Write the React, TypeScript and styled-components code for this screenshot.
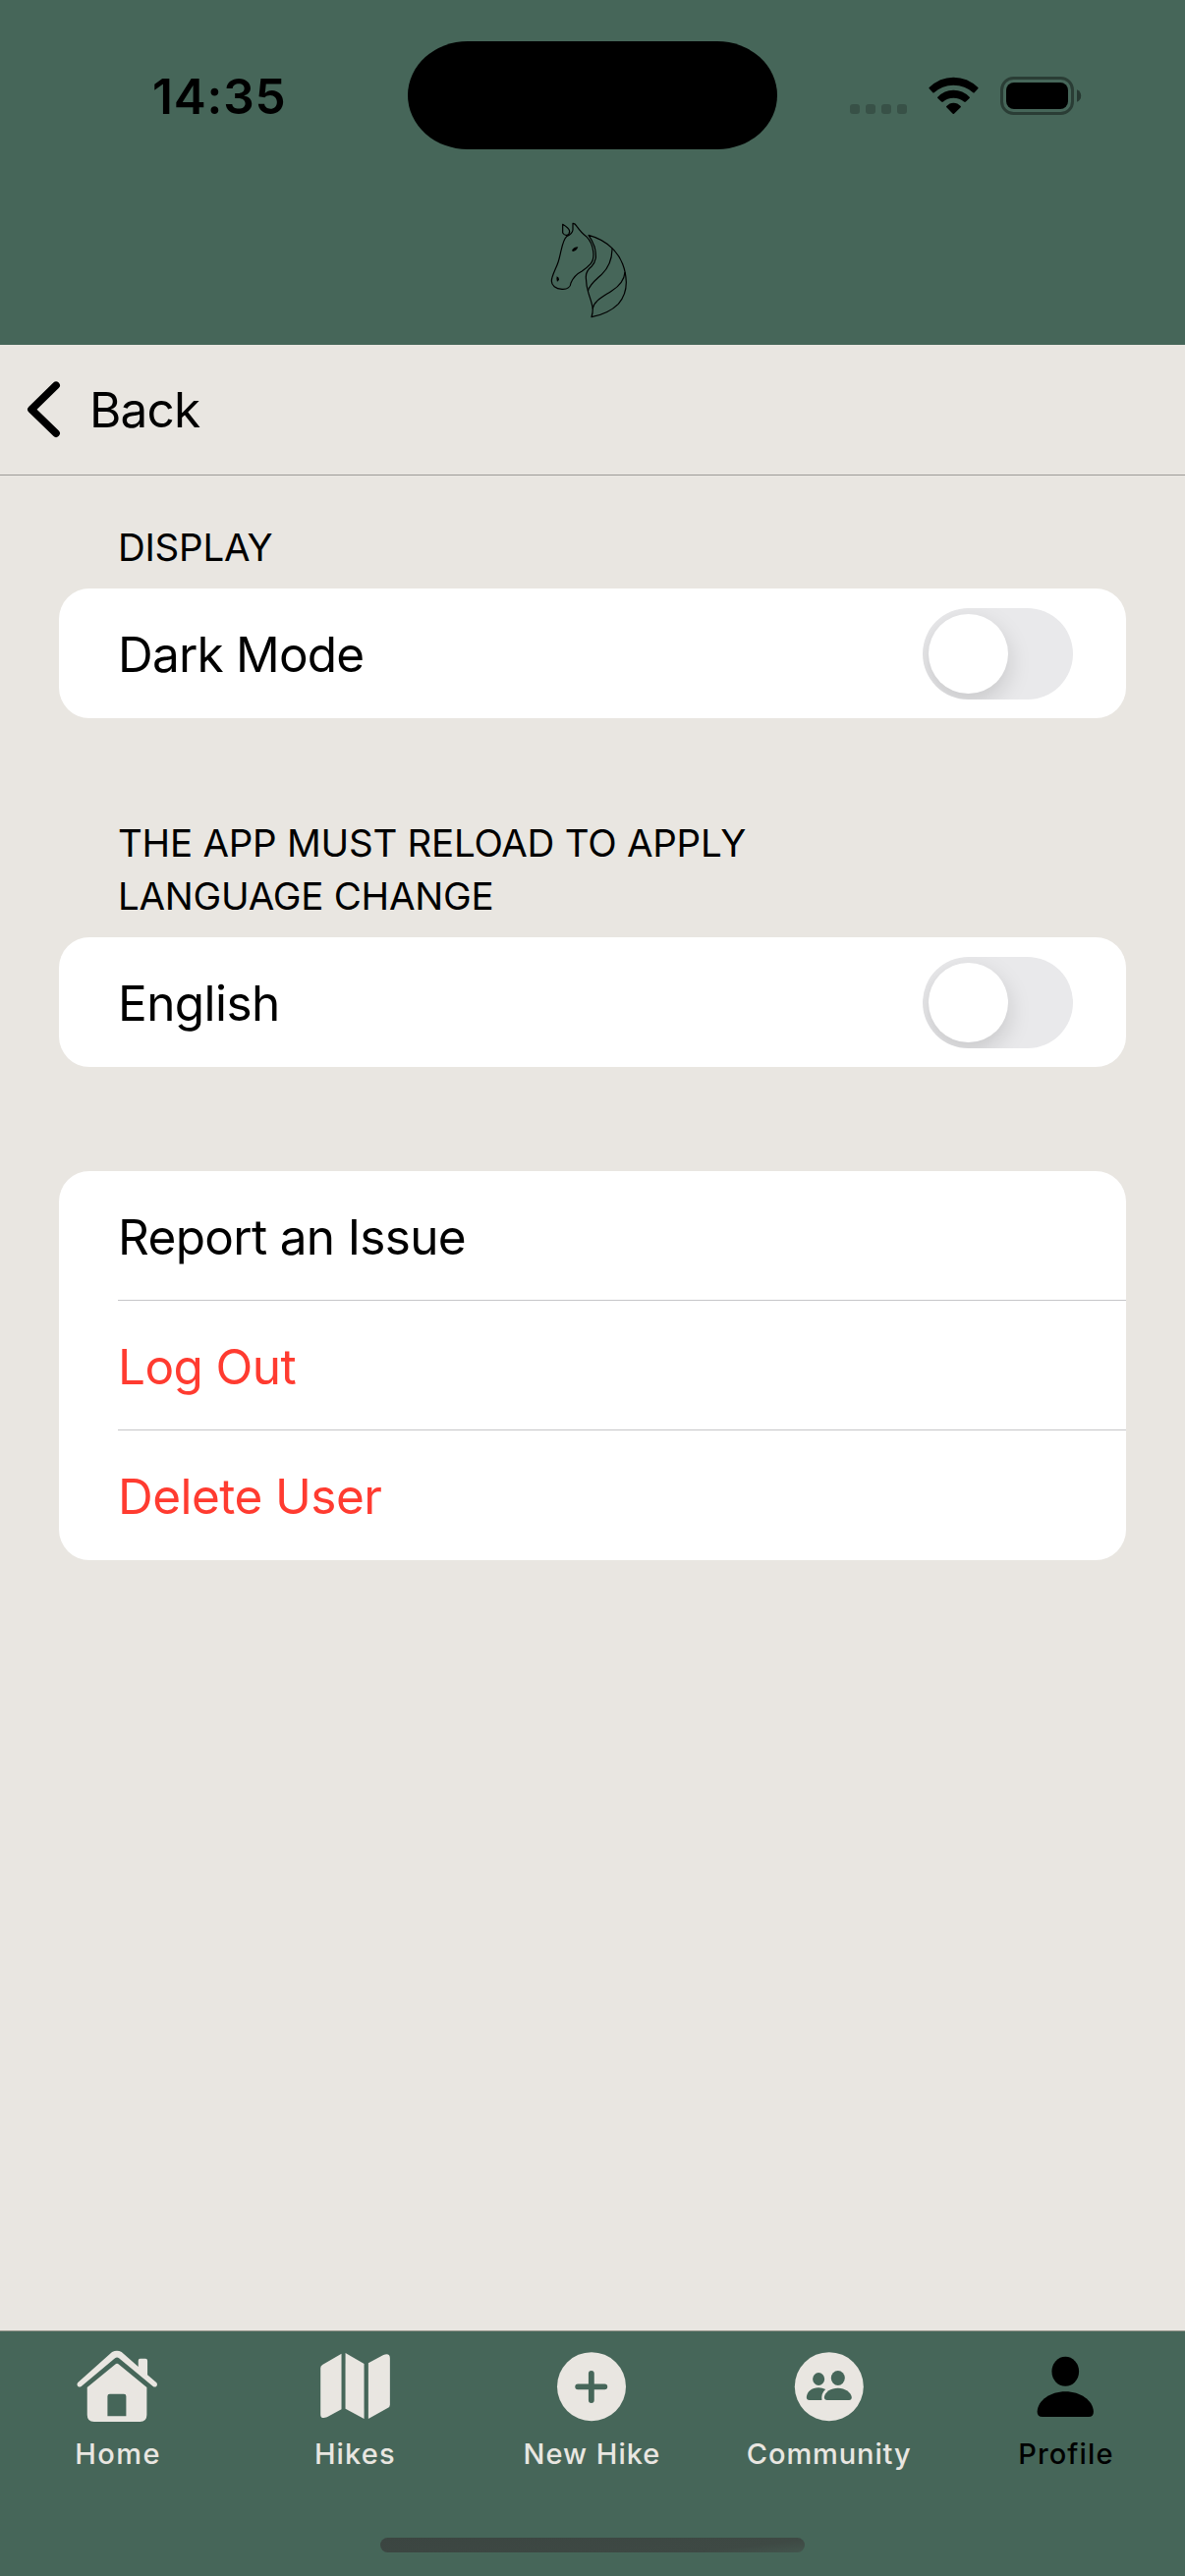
import React from "react";
import styled, { createGlobalStyle } from "styled-components";

const green = "#466659";
const cream = "#e9e6e1";
const danger = "#ff3b30";

const GlobalStyle = createGlobalStyle`
  *, *::before, *::after { box-sizing: border-box; }
  body {
    margin: 0;
    background: ${cream};
    font-family: Inter, "Liberation Sans", sans-serif;
    color: #000;
  }
  svg { display: block; flex: none; }
  button { font: inherit; color: inherit; background: none; border: 0; padding: 0; text-align: left; }
`;

const Screen = styled.div`
  display: flex;
  flex-direction: column;
  width: 1206px;
  height: 2622px;
  background: ${cream};
`;

const Header = styled.header`
  display: flex;
  flex-direction: column;
  height: 351px;
  background: ${green};
`;

const StatusBar = styled.div`
  display: grid;
  grid-template-columns: 415px 376px 415px;
  align-items: center;
  height: 152px;
  padding-top: 42px;
`;

const Clock = styled.time`
  padding: 2px 0 0 155px;
  font-size: 49.5px;
  line-height: 60px;
  font-weight: 600;
  letter-spacing: 0.85px;
`;

const Island = styled.div`
  height: 110px;
  border-radius: 61px / 55px;
  background: #000;
`;

const StatusIcons = styled.div`
  display: flex;
  align-items: center;
  padding: 1px 0 0 74px;
`;

const Brand = styled.div`
  display: flex;
  justify-content: center;
  padding-top: 58px;
`;

const BackBar = styled.nav`
  height: 133px;
  border-bottom: 1px solid #9d9b98;
`;

const BackButton = styled.button`
  display: flex;
  align-items: center;
  gap: 26px;
  height: 132px;
  padding-left: 25px;
  font-size: 49.5px;
  line-height: 60px;
  letter-spacing: -0.8px;
`;

const Content = styled.main`
  flex: 1;
  display: flex;
  flex-direction: column;
  padding: 46px 60px 0;
`;

const Section = styled.section<{ $before?: number }>`
  display: flex;
  flex-direction: column;
  gap: 15px;
  margin-top: ${(p) => p.$before ?? 0}px;
`;

const Caption = styled.h2<{ $tracking: number }>`
  margin: 0;
  max-width: 760px;
  padding-left: 60px;
  font-size: 38.5px;
  line-height: 54px;
  font-weight: 400;
  text-transform: uppercase;
  letter-spacing: ${(p) => p.$tracking}px;
`;

const Card = styled.div`
  display: flex;
  flex-direction: column;
  border-radius: 31px;
  background: #fff;
  overflow: hidden;
`;

const Row = styled.div<{ $tracking: number; $danger?: boolean }>`
  display: flex;
  align-items: center;
  justify-content: space-between;
  height: 132px;
  margin-left: 60px;
  padding: 2px 54px 0 0;
  font-size: 49.5px;
  line-height: 60px;
  letter-spacing: ${(p) => p.$tracking}px;
  color: ${(p) => (p.$danger ? danger : "#000")};

  &:not(:last-child) {
    border-bottom: 1px solid #c6c6c8;
  }
`;

const SwitchTrack = styled.button`
  display: flex;
  align-items: center;
  width: 153px;
  height: 93px;
  margin-top: -2px;
  padding: 6px;
  border-radius: 47px;
  background: #e9e9eb;
  overflow: hidden;
`;

const SwitchKnob = styled.span`
  width: 81px;
  height: 81px;
  border-radius: 50%;
  background: #fff;
  box-shadow: 0 9px 24px rgba(0, 0, 0, 0.15);
`;

const TabBar = styled.footer`
  display: flex;
  flex-direction: column;
  justify-content: space-between;
  align-items: center;
  height: 250px;
  padding: 15px 0 24px;
  border-top: 1px solid #98978d;
  background: ${green};
`;

const Tabs = styled.div`
  display: grid;
  grid-template-columns: repeat(5, 1fr);
  width: 100%;
`;

const Tab = styled.button<{ $active?: boolean }>`
  display: flex;
  flex-direction: column;
  align-items: center;
  gap: 8px;
  color: ${(p) => (p.$active ? "#000" : cream)};
`;

const TabLabel = styled.span<{ $tracking: number }>`
  padding-right: 1px;
  font-size: 29px;
  line-height: 36px;
  font-weight: 500;
  letter-spacing: ${(p) => p.$tracking}px;
`;

const HomeIndicator = styled.div`
  width: 432px;
  height: 15px;
  border-radius: 8px;
  background: linear-gradient(173deg, #3b4541 0%, #3e4944 80%, #43554d 100%);
`;

const SignalDots = () => (
  <svg width="58" height="38" viewBox="0 0 58 38" fill="#000" fillOpacity="0.2">
    {[0, 16, 32, 48].map((x) => (
      <rect key={x} x={x} y="27" width="10" height="10" rx="3" />
    ))}
  </svg>
);

const WifiIcon = () => (
  <svg width="95" height="39" viewBox="249 84 285 117" fill="#000">
    <path d="M317 117Q315 119 317 121L328 133Q330 134 332 133Q356 110 391 110Q427 110 451 133Q453 134 455 133L466 121Q468 119 466 117Q434 86 391 86Q349 86 317 117Z" />
    <path d="M343 146Q341 148 343 150L355 161Q357 162 359 161Q372 149 391 149Q410 149 424 161Q426 162 428 161L440 150Q442 148 440 146Q420 125 391 125Q363 125 343 146Z" />
    <path d="M370 174Q368 176 370 178L389 197Q391 199 393 197L413 178Q415 176 413 174Q404 164 391 164Q379 164 370 174Z" />
  </svg>
);

const BatteryIcon = () => (
  <svg width="84" height="39" viewBox="0 0 84 39">
    <rect x="1.5" y="1.5" width="72" height="36" rx="12" fill="none" stroke="#000" strokeOpacity="0.4" strokeWidth="3" />
    <rect x="6" y="6" width="63" height="27" rx="8" fill="#000" />
    <path d="M78 13.2Q82.2 15 82.2 19.5Q82.2 24 78 25.8Z" fill="#000" fillOpacity="0.45" />
  </svg>
);

const HorseLogo = () => (
  <svg width="126" height="130" viewBox="0 0 378 390" fill="none" stroke="#000" strokeWidth="3.6" strokeLinejoin="round">
    <path d="M98 55V81Q104 90 111 88Q119 86 119 76Q117 66 98 55Z" />
    <path d="M129 52Q135 51 141 61Q156 82 170 92C184 106 191 123 192 147Q192 166 183 176Q173 187 157 198Q133 210 123 234C122 246 112 254 96 253C76 252 64 241 64 228C64 213 77 192 84 171C94 140 96 103 110 92C121 87 128 81 129 72Z" />
    <path d="M186 338C222 331 251 315 268 298C285 279 292 255 292 232Q291 201 281 176Q270 148 248 127Q219 99 177 88Q188 103 195 123Q200 141 199 158Q196 174 186 184Q168 198 169 218Q170 246 177 266Q186 292 190 311Q190 326 186 338Z" />
    <path d="M249 128C249 165 237 189 217 208C201 223 180 238 175 259" />
    <path d="M288 201C286 225 275 241 248 258C223 275 194 287 189 313" />
    <path d="M126 135Q130 125 145 124Q141 136 129 138Z" fill="#000" stroke="none" />
    <path d="M80 214Q87 217 87 223Q86 229 81 230Q78 222 80 214Z" fill="#000" stroke="none" />
  </svg>
);

const ChevronLeft = () => (
  <svg width="40" height="60" viewBox="0 0 40 60" fill="none" stroke="#000" strokeWidth="7.8" strokeLinecap="round" strokeLinejoin="round">
    <path d="M32 5.3L7 29.7L32 54" />
  </svg>
);

const TabIcon = ({ x, children }: { x: number; children: React.ReactNode }) => (
  <svg width="96" height="84" viewBox={`${x} 114 288 252`} fill="currentColor">
    {children}
  </svg>
);

const HomeIcon = () => (
  <TabIcon x={217.8}>
    <path d="M341 132Q356 125 370 132L421 177V158Q421 152 427 152H443Q449 152 449 158V202L477 226Q481 231 477 236Q472 241 466 237L362 151Q356 146 350 151L247 237Q241 241 236 236Q232 231 236 226Z" />
    <path
      fillRule="evenodd"
      d="M350 170Q356 165 362 170L447 240V324Q447 345 426 345H286Q265 345 265 324V240ZM334 260Q327 260 327 267V328H384V267Q384 260 377 260Z"
    />
  </TabIcon>
);

const MapIcon = () => (
  <TabIcon x={941.4}>
    <path d="M1042 137V307L998 331Q978 338 978 323V181Q978 174 985 170Z" />
    <path d="M1054 135L1111 168V336L1054 305Z" />
    <path d="M1124 166L1170 141Q1190 134 1190 151V293Q1190 300 1183 303L1124 336Z" />
  </TabIcon>
);

const PlusCircleIcon = () => (
  <TabIcon x={465}>
    <circle cx="606" cy="237.5" r="105" />
    <path d="M605.5 197.5V279M564.5 238H646" stroke={green} strokeWidth="17.5" strokeLinecap="round" />
  </TabIcon>
);

const PeopleIcon = () => (
  <TabIcon x={-11.4}>
    <circle cx="132" cy="237.5" r="105" />
    <g fill={green}>
      <ellipse cx="100" cy="214.5" rx="18" ry="19.5" />
      <path d="M72 279Q63 279 63 270C65 253 79 241 100 241Q111 241 121 246Q107 258 110 279Z" />
      <ellipse cx="159" cy="211.5" rx="21" ry="22.5" />
      <path d="M126 279Q117 279 117 270C120 253 137 242 159 242C181 242 199 255 201 270Q201 279 193 279Z" />
    </g>
  </TabIcon>
);

const PersonIcon = () => (
  <TabIcon x={712.2}>
    <ellipse cx="854" cy="191.5" rx="41.5" ry="45" />
    <path d="M784 330Q768 330 768 314C770 280 808 253 854 253C900 253 938 280 940 314Q940 330 925 330Z" />
  </TabIcon>
);

const tabs = [
  { label: "Home", icon: HomeIcon, tracking: 1.4 },
  { label: "Hikes", icon: MapIcon, tracking: 1.13 },
  { label: "New Hike", icon: PlusCircleIcon, tracking: 1 },
  { label: "Community", icon: PeopleIcon, tracking: 0.9 },
  { label: "Profile", icon: PersonIcon, tracking: 1.13, active: true },
];

const Switch = ({ label }: { label: string }) => (
  <SwitchTrack role="switch" aria-checked={false} aria-label={label}>
    <SwitchKnob />
  </SwitchTrack>
);

export default function App() {
  return (
    <Screen>
      <GlobalStyle />
      <Header>
        <StatusBar>
          <Clock>14:35</Clock>
          <Island />
          <StatusIcons>
            <SignalDots />
            <WifiIcon />
            <BatteryIcon />
          </StatusIcons>
        </StatusBar>
        <Brand>
          <HorseLogo />
        </Brand>
      </Header>
      <BackBar>
        <BackButton>
          <ChevronLeft />
          Back
        </BackButton>
      </BackBar>
      <Content>
        <Section>
          <Caption $tracking={-0.25}>Display</Caption>
          <Card>
            <Row $tracking={-0.8}>
              Dark Mode
              <Switch label="Dark Mode" />
            </Row>
          </Card>
        </Section>
        <Section $before={100}>
          <Caption $tracking={-0.25}>The app must reload to apply language change</Caption>
          <Card>
            <Row $tracking={-0.58}>
              English
              <Switch label="English" />
            </Row>
          </Card>
        </Section>
        <Section $before={106}>
          <Card>
            <Row $tracking={-0.68}>Report an Issue</Row>
            <Row $tracking={-0.6} $danger>Log Out</Row>
            <Row $tracking={-0.55} $danger>Delete User</Row>
          </Card>
        </Section>
      </Content>
      <TabBar>
        <Tabs>
          {tabs.map(({ label, icon: Icon, tracking, active }) => (
            <Tab key={label} $active={active}>
              <Icon />
              <TabLabel $tracking={tracking}>{label}</TabLabel>
            </Tab>
          ))}
        </Tabs>
        <HomeIndicator />
      </TabBar>
    </Screen>
  );
}
